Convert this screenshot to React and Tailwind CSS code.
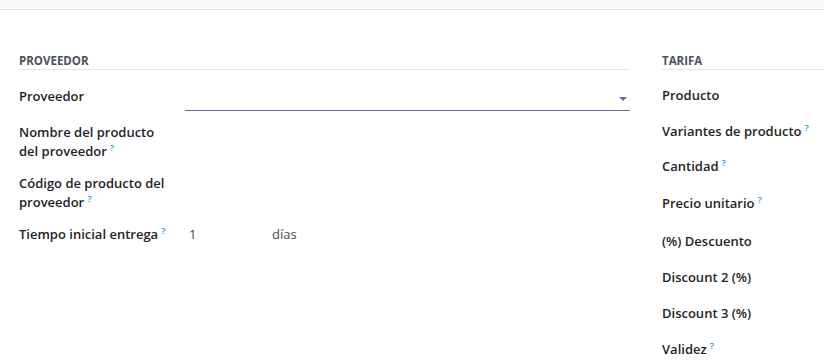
import React from "react";

const Help = () => (
  <span className="ml-[3px] inline-block align-top leading-[10px] mt-[1px] text-[9.5px] font-semibold text-[#1f9ad6]">?</span>
);

function LeftRow({ label, help, children, className, labelClass }) {
  return (
    <div className={"flex " + (className || "")}>
      <div className={"w-[166px] shrink-0 pr-[16px] font-semibold text-[#1f2329] leading-[19px] " + (labelClass || "")}>
        {label}
        {help && <Help />}
      </div>
      <div className="flex-1">{children}</div>
    </div>
  );
}

function RightRow({ label, help, h }) {
  return (
    <div className={"flex items-center font-semibold text-[#1f2329] " + h}>
      <span className="whitespace-nowrap leading-[19px]">
        {label}
        {help && <Help />}
      </span>
    </div>
  );
}

export default function App() {
  return (
    <div
      className="w-[824px] h-[362px] overflow-hidden bg-white text-[13px]"
      style={{ fontFamily: '"Open Sans", "Noto Sans", sans-serif' }}
    >
      <div className="h-[10px] bg-[#f8f9fa] border-b border-[#e3e5e8]" />
      <div className="flex pl-[19px] pt-[43px]">
        <div className="w-[611px] shrink-0">
          <div className="h-[17px] border-b border-[#e2e4e7] text-[11.5px] font-bold uppercase text-[#4b515a] leading-[16px]">
            Proveedor
          </div>
          <LeftRow label="Proveedor" className="mt-[14px] h-[27px]" labelClass="pt-[3px]">
            <div className="h-[27px] border-b border-[#71639e] relative">
              <div className="absolute right-[3px] top-[13px] w-0 h-0 border-l-[4px] border-r-[4px] border-t-[4px] border-l-transparent border-r-transparent border-t-[#71639e]" />
            </div>
          </LeftRow>
          <div className="mt-[12px]">
            <LeftRow label="Nombre del producto del proveedor" help />
          </div>
          <div className="mt-[13px]">
            <LeftRow label="Código de producto del proveedor" help />
          </div>
          <div className="mt-[13px]">
            <LeftRow label="Tiempo inicial entrega" help>
              <div className="flex text-[#454b52] leading-[19px]">
                <span className="w-[87px] pl-[4px]">1</span>
                <span>días</span>
              </div>
            </LeftRow>
          </div>
        </div>
        <div className="ml-[32px] flex-1">
          <div className="h-[17px] border-b border-[#e2e4e7] text-[11.5px] font-bold uppercase text-[#4b515a] leading-[16px]">
            Tarifa
          </div>
          <div className="pt-[8px]">
            <RightRow label="Producto" h="h-[35px]" />
            <RightRow label="Variantes de producto" help h="h-[36px]" />
            <RightRow label="Cantidad" help h="h-[35px]" />
            <RightRow label="Precio unitario" help h="h-[39px]" />
            <RightRow label="(%) Descuento" h="h-[37px]" />
            <RightRow label="Discount 2 (%)" h="h-[35px]" />
            <RightRow label="Discount 3 (%)" h="h-[36px]" />
            <RightRow label="Validez" help h="h-[36px]" />
          </div>
        </div>
      </div>
    </div>
  );
}
